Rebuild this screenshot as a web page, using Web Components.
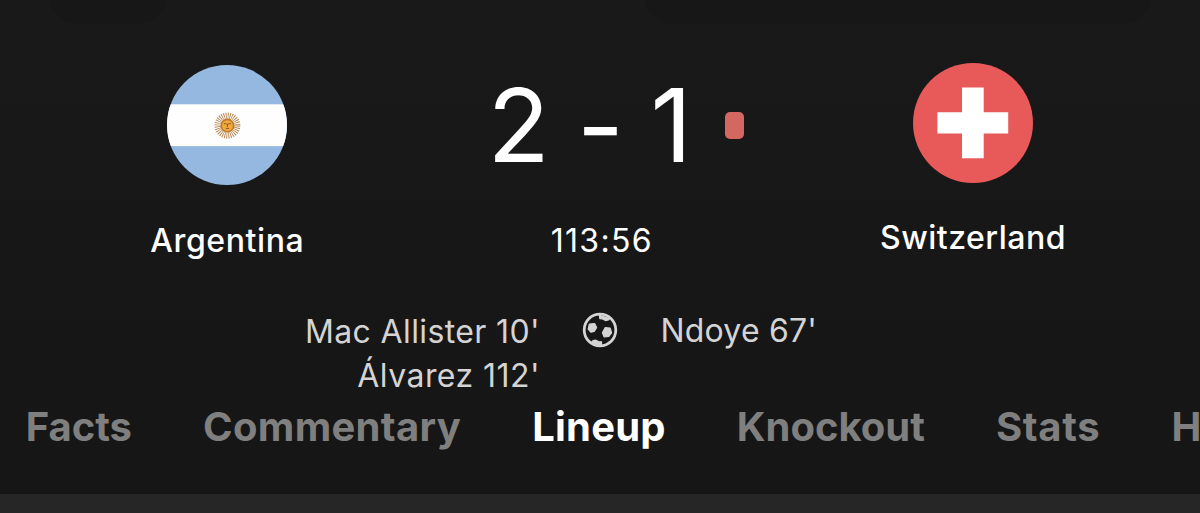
<!DOCTYPE html>
<html lang="en">
<head>
<meta charset="utf-8">
<title>Argentina 2 - 1 Switzerland</title>
<style>
body {
	margin: 0;
	width: 1200px;
	height: 513px;
	overflow: hidden;
	background: #161616;
	font-family: Inter, "Liberation Sans", sans-serif;
}
</style>
</head>
<body>
<match-page>
	<match-header>
		<match-team slot="home" name="Argentina" style="--top: 65.4px; --name-gap: 35.6px; --spacing: 0.6px"><flag-argentina></flag-argentina></match-team>
		<match-score home="2" away="1" time="113:56"></match-score>
		<match-team slot="away" name="Switzerland" style="--top: 62.8px; --name-gap: 35.7px; --spacing: 0.5px"><flag-switzerland></flag-switzerland></match-team>
	</match-header>
	<match-scorers>
		<div slot="home" style="letter-spacing: 0.38px">Mac Allister 10'</div>
		<div slot="home" style="letter-spacing: 0.45px">Álvarez 112'</div>
		<div slot="away" style="letter-spacing: 0.2px">Ndoye 67'</div>
	</match-scorers>
	<match-tabs>
		<match-tab>Facts</match-tab>
		<match-tab style="letter-spacing: 0.33px">Commentary</match-tab>
		<match-tab active style="letter-spacing: 0.2px">Lineup</match-tab>
		<match-tab>Knockout</match-tab>
		<match-tab style="letter-spacing: 0.7px">Stats</match-tab>
		<match-tab>H</match-tab>
	</match-tabs>
</match-page>

<template id="page">
<style>
:host {
	display: flex;
	flex-direction: column;
	position: relative;
	height: 513px;
	overflow: hidden;
	background: linear-gradient(#191919, #171717 50%, #161616 90%);
}
.shade {
	position: absolute;
	top: -40px;
	height: 64px;
	border-radius: 32px;
	background: #171717;
}
.back { left: 48px; width: 120px; }
.actions { left: 643px; width: 510px; }
.content {
	margin-top: auto;
	height: 19px;
	background: #262626;
}
</style>
<div class="shade back"></div>
<div class="shade actions"></div>
<slot></slot>
<div class="content"></div>
</template>

<template id="header">
<style>
:host {
	display: grid;
	grid-template-columns: 454.6px 290.4px 456px;
	position: relative;
	height: 308px;
}
</style>
<slot name="home"></slot>
<slot name="middle"></slot>
<slot name="away"></slot>
</template>

<template id="team">
<style>
:host {
	display: flex;
	flex-direction: column;
	align-items: center;
	box-sizing: border-box;
	padding-top: var(--top);
	gap: var(--name-gap);
}
.name {
	color: #fff;
	font-size: 32px;
	font-weight: 500;
	line-height: 40px;
	letter-spacing: var(--spacing);
}
</style>
<slot></slot>
<div class="name"></div>
</template>

<template id="score">
<style>
:host {
	display: flex;
	flex-direction: column;
	color: #fff;
}
.result {
	display: flex;
	align-items: center;
	gap: 32.5px;
	padding: 63px 0 0 33px;
}
.goals {
	font-size: 102px;
	line-height: 124px;
	word-spacing: -2px;
	white-space: nowrap;
}
.dash {
	margin: 0 0 0 0.5px;
	line-height: 0;
	vertical-align: -1px;
}
.card {
	width: 19.5px;
	height: 27px;
	border-radius: 5px;
	background: #d56762;
}
.time {
	padding-top: 34px;
	padding-left: 4px;
	text-align: center;
	font-size: 32px;
	line-height: 40px;
	letter-spacing: 1.3px;
}
</style>
<div class="result">
	<div class="goals"><span class="home"></span> <span class="dash">-</span> <span class="away"></span></div>
	<div class="card"></div>
</div>
<div class="time"></div>
</template>

<template id="argentina">
<style>
:host { display: block; width: 120px; height: 120px; }
svg { display: block; }
</style>
<svg width="120" height="120" viewBox="0 0 120 120">
	<defs><clipPath id="round"><circle cx="60" cy="60" r="60"/></clipPath></defs>
	<g clip-path="url(#round)">
		<rect width="120" height="120" fill="#95b8e0"/>
		<rect y="39.3" width="120" height="41.8" fill="#fefefe"/>
	</g>
	<g transform="translate(60.4 60.6)">
		<circle r="9.7" fill="none" stroke="#b98a55" stroke-width="6.6" stroke-dasharray="0.9 1.005"/>
		<circle r="7" fill="#bf7a2a"/>
		<circle r="5.4" fill="#f0a83c"/>
		<path d="M-3.5 -1.6Q-1.8 -2.8 -0.6 -1.4M3.5 -1.6Q1.8 -2.8 0.6 -1.4M0 -1.6V1.2M-1.5 2.8H1.5" fill="none" stroke="#8a551b" stroke-width="1"/>
	</g>
</svg>
</template>

<template id="switzerland">
<style>
:host { display: block; width: 120px; height: 120px; }
svg { display: block; }
</style>
<svg width="120" height="120" viewBox="0 0 120 120">
	<circle cx="60" cy="60" r="60" fill="#e85a59"/>
	<path d="M49 24.6H70.7V49.3H95.2V70.4H70.7V95.2H49V70.4H24.4V49.3H49Z" fill="#fff"/>
</svg>
</template>

<template id="scorers">
<style>
:host {
	display: grid;
	grid-template-columns: 540px 120px 1fr;
	position: relative;
	height: 92px;
	color: #d4d4d4;
	font-size: 32px;
	line-height: 44px;
	white-space: nowrap;
}
.home { text-align: right; padding-top: 2px; }
.away { padding-top: 1px; padding-left: 0.5px; }
.ball { display: flex; justify-content: center; padding-top: 4px; }
</style>
<div class="home"><slot name="home"></slot></div>
<div class="ball">
	<svg width="36" height="36" viewBox="0 0 36 36" fill="#d4d4d4">
		<circle cx="18" cy="18" r="15.8" fill="none" stroke="#d4d4d4" stroke-width="2.8"/>
		<g stroke="#d4d4d4" stroke-width="1.2" stroke-linejoin="round">
			<path d="M7.4 12L12.6 11.6L14.6 15.6L12.2 19.4L8.8 20.2L6.2 17Z"/>
			<path d="M23.2 15.6L28.2 16.2L29.6 20.8L26.8 24.4L22.2 25L20.4 20.8Z"/>
			<path d="M17.4 3.4L27.6 6.6L26.4 8L23.4 8.6L20.6 7L17.8 6.6Z"/>
			<path d="M9.6 30.2L11 28.6L14 28.2L16.4 29.6L19.6 29.8L19.4 33L14 32.8Z"/>
		</g>
	</svg>
</div>
<div class="away"><slot name="away"></slot></div>
</template>

<template id="tabs">
<style>
:host {
	display: flex;
	gap: 71px;
	position: relative;
	padding-top: 1.5px;
	padding-left: 25.7px;
	font-size: 40px;
	font-weight: 700;
	line-height: 50px;
	white-space: nowrap;
}
</style>
<slot></slot>
</template>

<template id="tab">
<style>
:host { display: block; flex: none; color: #7f7f7f; }
:host([active]) { color: #fff; }
</style>
<slot></slot>
</template>

<script>
// attach an open shadow root with a copy of the template
function render(el, id) {
	const shadow = el.attachShadow({ mode: 'open' });
	shadow.appendChild(document.getElementById(id).content.cloneNode(true));
	return shadow;
}

class MatchPage extends HTMLElement {
	connectedCallback() {
		render(this, 'page');
	}
}

class MatchHeader extends HTMLElement {
	connectedCallback() {
		render(this, 'header');
		this.querySelector('match-score').slot = 'middle';
	}
}

class MatchTeam extends HTMLElement {
	connectedCallback() {
		const shadow = render(this, 'team');
		shadow.querySelector('.name').textContent = this.getAttribute('name');
	}
}

class MatchScore extends HTMLElement {
	connectedCallback() {
		const shadow = render(this, 'score');
		shadow.querySelector('.home').textContent = this.getAttribute('home');
		shadow.querySelector('.away').textContent = this.getAttribute('away');
		shadow.querySelector('.time').textContent = this.getAttribute('time');
	}
}

class FlagArgentina extends HTMLElement {
	connectedCallback() {
		render(this, 'argentina');
	}
}

class FlagSwitzerland extends HTMLElement {
	connectedCallback() {
		render(this, 'switzerland');
	}
}

class MatchScorers extends HTMLElement {
	connectedCallback() {
		render(this, 'scorers');
	}
}

class MatchTabs extends HTMLElement {
	connectedCallback() {
		render(this, 'tabs');
	}
}

class MatchTab extends HTMLElement {
	connectedCallback() {
		render(this, 'tab');
	}
}

window.customElements.define('match-page', MatchPage);
window.customElements.define('match-header', MatchHeader);
window.customElements.define('match-team', MatchTeam);
window.customElements.define('match-score', MatchScore);
window.customElements.define('flag-argentina', FlagArgentina);
window.customElements.define('flag-switzerland', FlagSwitzerland);
window.customElements.define('match-scorers', MatchScorers);
window.customElements.define('match-tabs', MatchTabs);
window.customElements.define('match-tab', MatchTab);
</script>
</body>
</html>
